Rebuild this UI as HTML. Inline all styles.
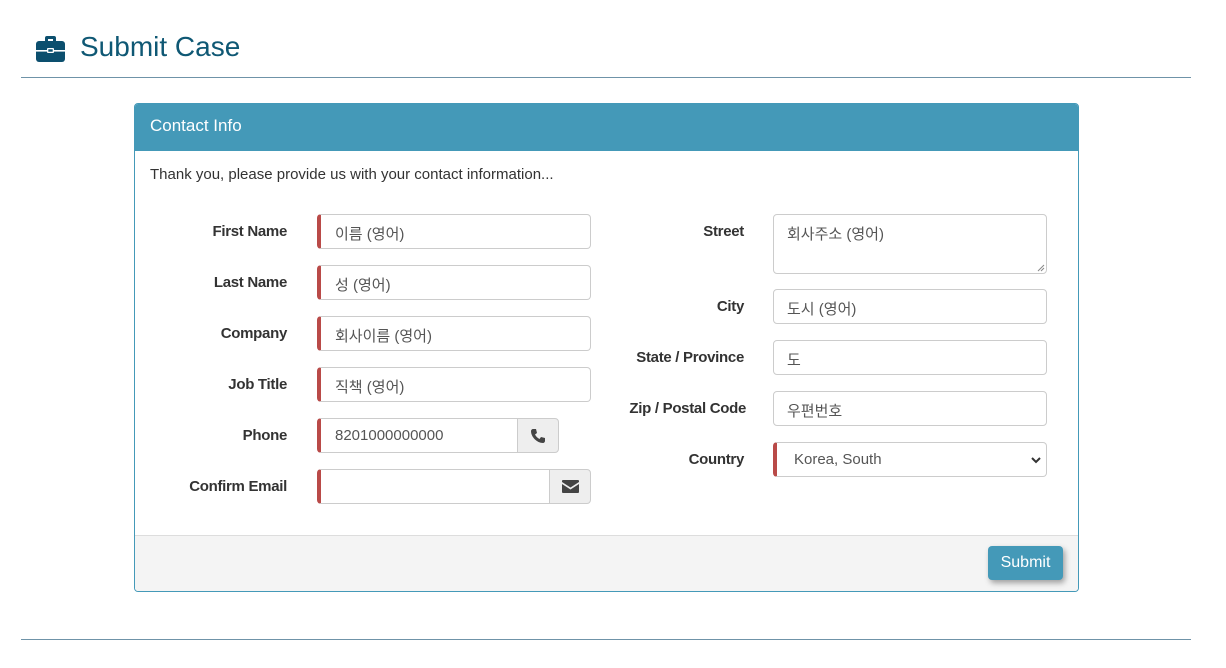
<!DOCTYPE html>
<html><head><meta charset="utf-8"><style>
*{box-sizing:border-box;margin:0;padding:0}
body{width:1226px;height:668px;background:#fff;font-family:"Liberation Sans","Noto Sans CJK KR",sans-serif;position:relative;overflow:hidden;color:#333}
.a{position:absolute}
.lbl{position:absolute;font-weight:bold;font-size:15px;color:#333;text-align:right;width:200px;letter-spacing:-0.3px}
.in{position:absolute;height:35px;border:1px solid #ccc;border-radius:4px;background:#fff;font-size:15px;color:#555;padding:8px 0 0 14px;font-family:"Liberation Sans","Noto Sans CJK KR",sans-serif}
.req{border-left:4px solid #b94a48}
.add{position:absolute;height:35px;border:1px solid #ccc;border-radius:0 4px 4px 0;background:#eee;display:flex;align-items:center;justify-content:center}
</style></head><body>
<svg class="a" style="left:36px;top:35px" width="29" height="27" viewBox="0 0 29 27"><path d="M9 6V3a2 2 0 0 1 2-2h7a2 2 0 0 1 2 2v3h-3V4h-5v2z" fill="#0c4f6e"/><rect x="0" y="6" width="29" height="21" rx="3" fill="#0c4f6e"/><rect x="0" y="15" width="29" height="1.6" fill="#fff"/><rect x="11" y="13" width="7" height="5" rx="1" fill="#fff"/><rect x="12.3" y="14.3" width="4.4" height="2.4" fill="#0c4f6e"/></svg>
<div class="a" style="left:80px;top:31px;font-size:28px;color:#0f5874">Submit Case</div>
<div class="a" style="left:21px;top:77px;width:1170px;height:1px;background:#6f93a8"></div>
<div class="a" style="left:134px;top:103px;width:945px;height:489px;border:1px solid #4499b8;border-radius:4px;overflow:hidden">
<div style="height:47px;background:#4499b8;color:#fff;font-size:17px;padding:12px 0 0 15px">Contact Info</div>
<div class="a" style="left:0;top:431px;width:943px;height:56px;background:#f4f4f4;border-top:1px solid #ddd"></div>
</div>
<div class="a" style="left:150px;top:166px;font-size:15px;color:#333">Thank you, please provide us with your contact information...</div>
<div class="lbl" style="left:87px;top:223px">First Name</div>
<div class="lbl" style="left:87px;top:274px">Last Name</div>
<div class="lbl" style="left:87px;top:325px">Company</div>
<div class="lbl" style="left:87px;top:376px">Job Title</div>
<div class="lbl" style="left:87px;top:427px">Phone</div>
<div class="lbl" style="left:87px;top:478px">Confirm Email</div>
<div class="in req" style="left:317px;top:214px;width:274px">이름 (영어)</div>
<div class="in req" style="left:317px;top:265px;width:274px">성 (영어)</div>
<div class="in req" style="left:317px;top:316px;width:274px">회사이름 (영어)</div>
<div class="in req" style="left:317px;top:367px;width:274px">직책 (영어)</div>
<div class="in req" style="left:317px;top:418px;width:201px;border-radius:4px 0 0 4px">8201000000000</div>
<div class="add" style="left:517px;top:418px;width:42px"><svg width="16" height="16" viewBox="0 0 16 16"><path d="M3 1l3 0 1 4-2 1.5c1 2 2.5 3.5 4.5 4.5L11 9l4 1v3c0 1-1 2-2 2C7 15 1 9 1 3c0-1 1-2 2-2z" fill="#444"/></svg></div>
<div class="in req" style="left:317px;top:469px;width:233px;border-radius:4px 0 0 4px"></div>
<div class="add" style="left:549px;top:469px;width:42px"><svg width="17" height="13" viewBox="0 0 17 13"><path d="M1 0h15a1 1 0 0 1 1 1v1L8.5 7.5 0 2V1a1 1 0 0 1 1-1z M0 4l8.5 5.5L17 4v8a1 1 0 0 1-1 1H1a1 1 0 0 1-1-1z" fill="#444"/></svg></div>
<div class="lbl" style="left:544px;top:223px">Street</div>
<div class="lbl" style="left:544px;top:298px">City</div>
<div class="lbl" style="left:544px;top:349px">State / Province</div>
<div class="lbl" style="left:546px;top:400px">Zip / Postal Code</div>
<div class="lbl" style="left:544px;top:451px">Country</div>
<div class="in" style="left:773px;top:214px;width:274px;height:60px;padding-left:13px">회사주소 (영어)<svg class="a" style="right:1px;bottom:1px" width="8" height="8"><path d="M7 1L1 7M7 4L4 7" stroke="#888"/></svg></div>
<div class="in" style="left:773px;top:289px;width:274px;padding-left:13px">도시 (영어)</div>
<div class="in" style="left:773px;top:340px;width:274px;padding-left:13px">도</div>
<div class="in" style="left:773px;top:391px;width:274px;padding-left:13px">우편번호</div>
<div class="in req" style="left:773px;top:442px;width:274px;padding-left:17px">Korea, South<svg class="a" style="right:5px;top:14px" width="10" height="7"><path d="M1 1l4 4 4-4" stroke="#333" stroke-width="2" fill="none"/></svg></div>
<div class="a" style="left:988px;top:546px;width:75px;height:34px;background:#4499b8;border-radius:4px;color:#fff;font-size:16px;text-align:center;line-height:33px;box-shadow:2px 3px 6px rgba(0,0,0,.35)">Submit</div>
<div class="a" style="left:21px;top:639px;width:1170px;height:1px;background:#6f93a8"></div>
</body></html>
